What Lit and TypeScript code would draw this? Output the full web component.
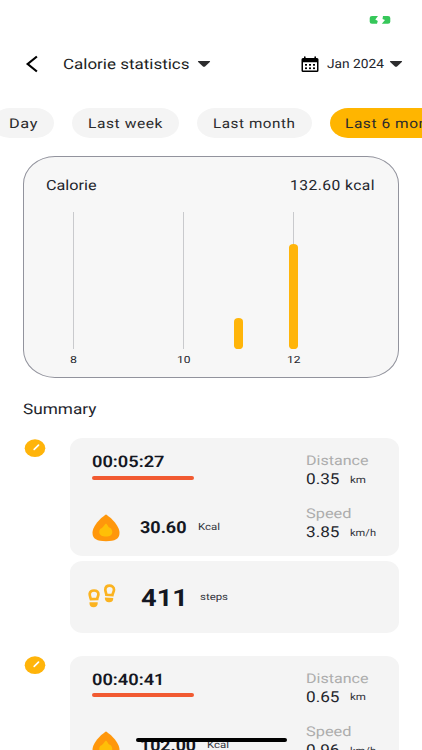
import { LitElement, html, svg, css } from "lit";
import { customElement, property } from "lit/decorators.js";

/** A line of text stretched to a given advance width. The baseline sits 15px down a 20px box. */
@customElement("wide-text")
class WideText extends LitElement {
  @property() text = "";
  @property({ type: Number }) width = 50;
  static styles = css`
    :host { display: block; flex: none; height: 20px; color: #23252c; }
    svg { display: block; overflow: visible; }
    text { font-family: Roboto, sans-serif; fill: currentColor; text-rendering: geometricPrecision; }
  `;
  render() {
    return html`<svg width=${this.width} height="20">
      <text x="0" y="15" textLength=${this.width} lengthAdjust="spacingAndGlyphs">${this.text}</text>
    </svg>`;
  }
}

const caret = html`<svg class="caret" width="14" height="8" viewBox="0 0 14 8">
  <path d="M1.4 1H12.6Q13.5 1.1 12.8 1.9L8.3 6.2Q7 7.2 5.7 6.2L1.2 1.9Q.5 1.1 1.4 1Z" fill="#2c2c2e" />
</svg>`;

const dots = [0, 1, 2].flatMap((c) => [0, 1].map((r) => svg`<rect x=${4 + c * 4} y=${8 + r * 3.4} width="2" height="1.7" />`));

@customElement("activity-entry")
class ActivityEntry extends LitElement {
  @property() time = "";
  @property() kcal = "";
  @property({ type: Number }) kcalWidth = 47;
  @property() distance = "";
  @property() speed = "";
  @property() steps = "";
  static styles = css`
    :host { display: flex; align-items: flex-start; height: 217.7px; }
    .badge { display: block; flex: none; margin: 0.5px 24px 0 1px; }
    .cards { display: flex; flex-direction: column; gap: 5.4px; width: 329px; flex: none; }
    .card { background: #f4f4f4; border-radius: 13px / 11px; box-sizing: border-box; }
    .main { height: 118px; display: flex; padding: 0 0 0 22px; }
    .left { width: 213.5px; padding-top: 14px; flex: none; }
    .right { padding-top: 12px; }
    .time { font-size: 16px; font-weight: 600; color: #141722; }
    .rule { width: 101.5px; height: 4px; border-radius: 2px; background: #f15a31; margin-top: 3.5px; }
    .burn { display: flex; margin-top: 34.3px; }
    .flame { display: block; margin-right: 19.5px; }
    .kcal { font-size: 16.5px; font-weight: 700; color: #141722; margin: 4.2px 11.5px 0 0; }
    .unit { font-size: 9.7px; color: #30323a; }
    .burn .unit { margin-top: 1.7px; }
    .label { font-size: 13.5px; color: #adadad; }
    .row { display: flex; margin-top: -1px; }
    .value { font-size: 15px; margin-right: 11px; }
    .row .unit { margin-top: -1.5px; }
    .speed { margin-top: 14.4px; }
    .stepcard { height: 72px; display: flex; padding-left: 17px; }
    .feet { display: block; margin: 22px 24px 0 0; flex: none; }
    .steps { font-size: 24px; font-weight: 700; color: #141722; margin: 29.3px 12px 0 0; }
    .stepcard .unit { margin-top: 23.5px; }
  `;
  render() {
    return html`
      <svg class="badge" width="22" height="19" viewBox="0 0 22 19">
        <ellipse cx="11" cy="9.2" rx="10.3" ry="8.9" fill="#ffb40a" />
        <path d="M10.2 10.3L14.5 6.2" stroke="#fff" stroke-width="1.7" stroke-linecap="round" />
      </svg>
      <div class="cards">
        <div class="card main">
          <div class="left">
            <wide-text class="time" .text=${this.time} .width=${72.5}></wide-text>
            <div class="rule"></div>
            <div class="burn">
              <svg class="flame" width="28" height="28" viewBox="0 0 28 28">
                <path d="M14 .4C16.2 1.5 27.5 10.5 27.5 18.8C27.5 25 23 27.2 14 27.2S.5 25 .5 18.8C.5 10.5 11.8 1.5 14 .4Z" fill="#ff970b" />
                <path d="M14 9.5C15 10 16 12.5 17 13.5C18.5 13 20.3 15.5 20.3 18C20.3 21.2 17.8 22.5 14 22.5S7.2 21.2 7.2 18C7.2 15.6 8.6 14.2 9.6 14.2C11 13.5 12.5 10.3 14 9.5Z" fill="#ffbf07" />
              </svg>
              <wide-text class="kcal" .text=${this.kcal} .width=${this.kcalWidth}></wide-text>
              <wide-text class="unit" text="Kcal" .width=${22}></wide-text>
            </div>
          </div>
          <div class="right">
            <wide-text class="label" text="Distance" .width=${62.5}></wide-text>
            <div class="row">
              <wide-text class="value" .text=${this.distance} .width=${33.5}></wide-text>
              <wide-text class="unit" text="km" .width=${16}></wide-text>
            </div>
            <wide-text class="label speed" text="Speed" .width=${45.5}></wide-text>
            <div class="row">
              <wide-text class="value" .text=${this.speed} .width=${33.5}></wide-text>
              <wide-text class="unit" text="km/h" .width=${26}></wide-text>
            </div>
          </div>
        </div>
        <div class="card stepcard">
          <svg class="feet" width="30" height="27" viewBox="0 0 30 27">
            <g fill="none" stroke="#fbb320" stroke-width="2.7">
              <path d="M3.9 16.2C3.2 14 2.4 12.5 2.7 10.5C3.1 8.5 4.7 7.5 7 7.5C9.8 7.5 11.5 9 11.4 11.3C11.3 13.3 10.3 14.5 10.2 16Z" />
              <path d="M19.4 11.8C19.2 9.8 18.3 8.5 18.3 6.8C18.4 4.2 20 2.7 22.5 2.7C25 2.7 27 4.3 27 6.8C27 8.7 25.7 10.3 25.4 12.1Z" />
            </g>
            <path d="M2.5 19.3H10.7V20.5C10.7 22.8 9 24.2 6.6 24.2C4 24.2 2.5 22.7 2.5 20.5ZM17.9 14.6L26.2 15V16.3C26 18.3 24.3 19.4 21.9 19.2C19.5 19 18 17.7 17.9 15.7Z" fill="#fbb320" />
          </svg>
          <wide-text class="steps" .text=${this.steps} .width=${47}></wide-text>
          <wide-text class="unit" text="steps" .width=${28}></wide-text>
        </div>
      </div>`;
  }
}

@customElement("app-root")
class AppRoot extends LitElement {
  static styles = css`
    :host { display: block; position: relative; width: 422px; height: 750px; overflow: hidden; background: #fff; }
    .status { display: flex; justify-content: flex-end; height: 50px; padding: 15px 31px 0 0; box-sizing: border-box; }
    .header { display: flex; align-items: flex-start; height: 58px; padding: 4px 0 0 25px; box-sizing: border-box; }
    .back { margin: 1px 24px 0 0; }
    .header svg { display: block; flex: none; }
    .title { font-size: 14.3px; color: #1c1e24; margin-right: 7.5px; }
    .header .caret { margin-top: 6px; }
    .calendar { margin: 2px 8px 0 90px; }
    .month { font-size: 12.7px; margin: -1px 5px 0 0; }
    .chips { display: flex; gap: 18px; margin-left: -8px; height: 30px; }
    .chip { flex: none; height: 30px; box-sizing: border-box; border-radius: 18px / 15px; background: #f4f4f4; padding: 4.5px 16px 0 16px; }
    .chip wide-text { font-size: 13.5px; letter-spacing: 0.5px; color: #2b2b2d; }
    .chip:first-child { padding-left: 17px; }
    .active { background: #ffb500; padding-left: 15.5px; }
    .chart { box-sizing: border-box; width: 376px; height: 222px; margin: 18px 0 0 23px; border: 1px solid #92939d; border-radius: 32px / 28px; background: #f7f7f7; }
    .top { display: flex; justify-content: space-between; padding: 17.5px 23px 0 22px; height: 55px; box-sizing: border-box; }
    .top wide-text { font-size: 14px; }
    .amount { letter-spacing: 0.4px; }
    .plot { display: grid; grid-template-columns: repeat(5, 55px); margin-left: 22px; }
    .col { display: flex; flex-direction: column; align-items: center; }
    .track { width: 55px; height: 138px; display: flex; justify-content: center; align-items: flex-end; }
    .ticked { background: linear-gradient(#c9cacd, #c9cacd) 27px 0 / 1px 137px no-repeat; }
    .bar { width: 9.5px; border-radius: 5px / 4px; background: #ffb50a; margin-bottom: 1px; }
    .tick { font-size: 9.8px; margin-top: -1.6px; }
    .summary { font-size: 14.6px; margin: 21px 0 0 22.5px; }
    .list { margin: 19px 0 0 23px; }
    .home { position: absolute; left: 136px; top: 738px; width: 150.5px; height: 4px; border-radius: 2px; background: #000; }
  `;
  chips = [
    { label: "Day", width: 29 },
    { label: "Last week", width: 75 },
    { label: "Last month", width: 82.5 },
    { label: "Last 6 months", width: 106 },
  ];
  months = [
    { tick: "8", width: 7, bar: 0 },
    { tick: "", width: 0, bar: 0 },
    { tick: "10", width: 13.5, bar: 0 },
    { tick: "", width: 0, bar: 31.5 },
    { tick: "12", width: 13.5, bar: 105.5 },
  ];
  render() {
    return html`
      <div class="status">
        <svg width="22" height="10" viewBox="0 0 22 10">
          <path d="M3 1H9L6.3 4.4L8.8 6L8 8.8H3Q.7 8.8 .7 6.8V3Q.7 1 3 1ZM14 1H19Q21.3 1 21.3 3V6.8Q21.3 8.800 19 8.800H12.8L16 5L13.5 4Z" fill="#36c75a" />
        </svg>
      </div>
      <div class="header">
        <svg class="back" width="14" height="18" viewBox="0 0 14 18">
          <path d="M11.9 1.5L2.7 9L11.9 16.5" fill="none" stroke="#000" stroke-width="2.2" />
        </svg>
        <wide-text class="title" text="Calorie statistics" .width=${126.5}></wide-text>
        ${caret}
        <svg class="calendar" width="18" height="17" viewBox="0 0 18 17">
          <path fill-rule="evenodd" d="M3 1Q3 .3 3.8 .3T4.6 1V2H13.4V1Q13.4 .3 14.2 .3T15 1V2H16Q17.5 2 17.5 3.5V14.5Q17.5 16 16 16H2Q.5 16 .5 14.5V3.5Q.5 2 2 2H3ZM2 6.2V14.5H16V6.2Z" />
          ${dots}
        </svg>
        <wide-text class="month" text="Jan 2024" .width=${57}></wide-text>
        ${caret}
      </div>
      <div class="chips">
        ${this.chips.map((c, i) => html`<div class="chip ${i === 3 ? "active" : ""}">
          <wide-text .text=${c.label} .width=${c.width}></wide-text>
        </div>`)}
      </div>
      <div class="chart">
        <div class="top">
          <wide-text text="Calorie" .width=${50.5}></wide-text>
          <wide-text class="amount" text="132.60 kcal" .width=${85}></wide-text>
        </div>
        <div class="plot">
          ${this.months.map((m) => html`<div class="col">
            <div class="track ${m.tick ? "ticked" : ""}">
              ${m.bar ? html`<div class="bar" style="height:${m.bar}px"></div>` : ""}
            </div>
            ${m.tick ? html`<wide-text class="tick" .text=${m.tick} .width=${m.width}></wide-text>` : ""}
          </div>`)}
        </div>
      </div>
      <wide-text class="summary" text="Summary" .width=${73.5}></wide-text>
      <div class="list">
        <activity-entry time="00:05:27" kcal="30.60" .kcalWidth=${46.5} distance="0.35" speed="3.85" steps="411"></activity-entry>
        <activity-entry time="00:40:41" kcal="102.00" .kcalWidth=${56} distance="0.65" speed="0.96" steps="536"></activity-entry>
      </div>
      <div class="home"></div>
    `;
  }
}
